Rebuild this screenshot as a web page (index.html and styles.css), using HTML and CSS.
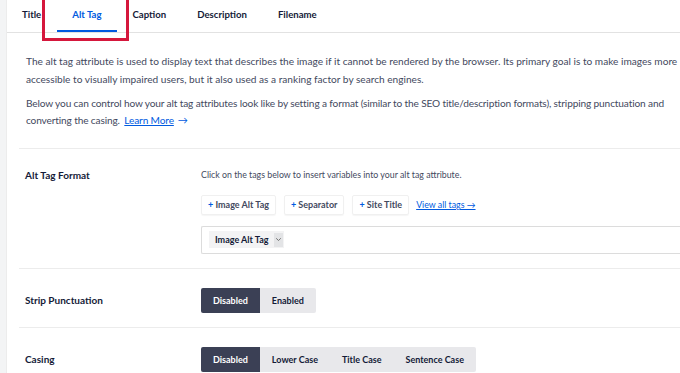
FILE: index.html
```html
<!DOCTYPE html>
<html>
<head>
<meta charset="utf-8">
<link rel="stylesheet" href="styles.css">
</head>
<body>
<div class="page">
  <div class="strip"></div>
  <div class="main">
    <nav class="tabs">
      <span class="tab">Title</span>
      <span class="tab active">Alt Tag<span class="highlight"></span></span>
      <span class="tab">Caption</span>
      <span class="tab">Description</span>
      <span class="tab">Filename</span>
    </nav>
    <div class="panel">
      <div class="intro">
        <p>The alt tag attribute is used to display text that describes the image if it cannot be rendered by the browser. Its primary goal is to make images more accessible to visually impaired users, but it also used as a ranking factor by search engines.</p>
        <p class="note">Below you can control how your alt tag attributes look like by setting a format (similar to the SEO title/description formats), stripping punctuation and converting the casing. <a href="#" class="link more">Learn More<span class="arrow">→</span></a></p>
      </div>
      <div class="row row-format">
        <div class="label">Alt Tag Format</div>
        <div class="control">
          <div class="hint">Click on the tags below to insert variables into your alt tag attribute.</div>
          <div class="tags">
            <span class="tag"><b>+</b> Image Alt Tag</span>
            <span class="tag"><b>+</b> Separator</span>
            <span class="tag"><b>+</b> Site Title</span>
            <a href="#" class="link small">View all tags →</a>
          </div>
          <div class="input">
            <span class="chip">Image Alt Tag <span class="caret"><svg width="7" height="5" viewBox="0 0 7 5"><path d="M1.2 1.3 L3.5 3.5 L5.8 1.3" fill="none" stroke="#666" stroke-width="0.9"/></svg></span></span>
          </div>
        </div>
      </div>
      <div class="row row-toggle">
        <div class="label">Strip Punctuation</div>
        <div class="control">
          <div class="group">
            <span class="btn on">Disabled</span><span class="btn">Enabled</span>
          </div>
        </div>
      </div>
      <div class="row row-toggle last">
        <div class="label">Casing</div>
        <div class="control">
          <div class="group">
            <span class="btn on">Disabled</span><span class="btn">Lower Case</span><span class="btn">Title Case</span><span class="btn">Sentence Case</span>
          </div>
        </div>
      </div>
    </div>
  </div>
</div>
</body>
</html>
```
FILE: styles.css
```css
* { box-sizing: border-box; }
html, body { margin: 0; padding: 0; background: #fff; }
body {
  font-family: Lato, "Noto Sans", sans-serif;
  color: #434960;
  width: 680px;
  height: 373px;
  overflow: hidden;
}
.page { display: flex; height: 373px; }
.strip { width: 7px; background: #f3f4f5; border-right: 1px solid #ececec; flex: none; }
.main { flex: 1; min-width: 0; }

.tabs {
  display: flex;
  height: 33px;
  border-bottom: 1px solid #e2e2e2;
}
.tab {
  position: relative;
  padding: 0 15px;
  margin-right: 1px;
  height: 32px;
  line-height: 29px;
  font-size: 9.6px;
  font-weight: 700;
  color: #141b38;
}
.tab.active { color: #005ae0; border-bottom: 2px solid #005ae0; }
.highlight {
  position: absolute;
  left: -15px;
  top: -4px;
  width: 87px;
  height: 45px;
  border: 3px solid #d5173c;
}

.panel { padding-left: 12px; }
.intro { padding: 20px 0 18px 7px; border-bottom: 1px solid #ececec; }
.intro p {
  margin: 0 0 6.5px;
  font-size: 10.15px;
  line-height: 17.5px;
}
.intro p.note { letter-spacing: -0.14px; }
.intro p:last-child { margin-bottom: 0; }
.link { color: #005ae0; text-decoration: underline; }
.more { margin-left: 2px; }
.arrow { display: inline-block; margin-left: 4px; color: #005ae0; text-decoration: none; }

.row { display: flex; border-bottom: 1px solid #ececec; }
.row.last { border-bottom: none; }
.label {
  width: 182px;
  flex: none;
  padding-left: 6px;
  font-size: 10px;
  font-weight: 700;
  color: #141b38;
}
.control { flex: 1; }
.row-format { padding: 18px 0 14px; }
.row-format .label { line-height: 16px; }
.hint { font-size: 8.8px; line-height: 16px; color: #434960; }
.tags { display: flex; align-items: center; gap: 8px; margin-top: 12px; }
.tag {
  height: 20px;
  line-height: 18px;
  padding: 0 6px;
  border: 1px solid #f0f0f0;
  border-radius: 2px;
  box-shadow: 0 1px 1px rgba(0,0,0,0.04);
  font-size: 9px;
  font-weight: 700;
  color: #434960;
}
.tag b { color: #005ae0; font-weight: 700; }
.link.small { font-size: 8.8px; margin-left: -1px; }
.input {
  margin-top: 11px;
  height: 28px;
  border: 1px solid #dcdcdc;
  border-right: none;
  border-radius: 2px 0 0 2px;
  padding: 5px 7px;
  display: flex;
  align-items: center;
}
.chip {
  display: inline-flex;
  align-items: center;
  gap: 5px;
  height: 17px;
  padding: 0 1px 0 6px;
  background: #f3f3f4;
  font-size: 9px;
  font-weight: 700;
  color: #141b38;
}
.caret {
  width: 9px;
  height: 14px;
  background: #e3e4e6;
  display: inline-flex;
  align-items: center;
  justify-content: center;
}

.row-toggle { padding: 19px 0 14px; align-items: center; }
.group { display: flex; }
.btn {
  height: 25px;
  line-height: 25px;
  padding: 0 12px;
  background: #e8e8eb;
  font-size: 9px;
  font-weight: 700;
  color: #141b38;
}
.btn:first-child { border-radius: 2px 0 0 2px; }
.btn:last-child { border-radius: 0 2px 2px 0; }
.btn.on { background: #3b4055; color: #fff; }
```
